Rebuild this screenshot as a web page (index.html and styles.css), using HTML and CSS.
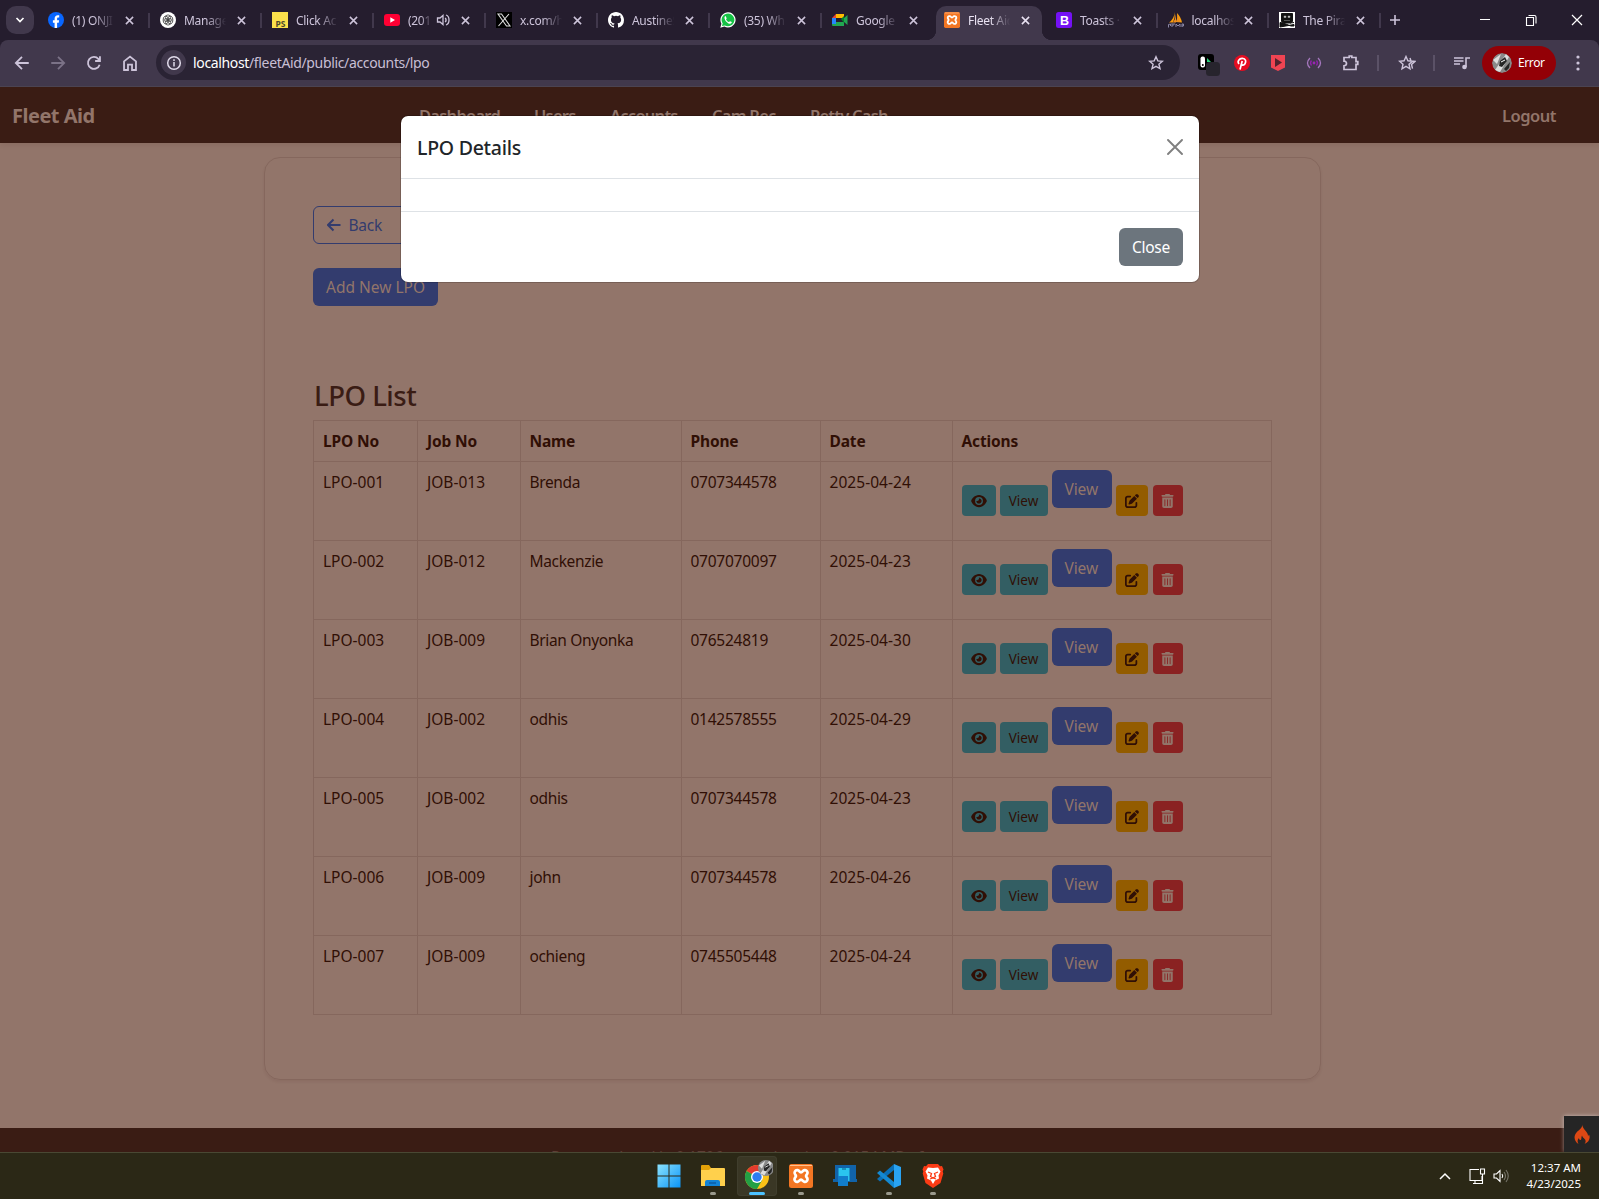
FILE: index.html
```html
<!DOCTYPE html>
<html lang="en">
<head>
<meta charset="utf-8">
<title>Fleet Aid</title>
<link rel="stylesheet" href="styles.css">
</head>
<body>
<svg class="defs" width="0" height="0">
  <symbol id="x" viewBox="0 0 10 10"><path d="M1 1l8 8M9 1l-8 8" fill="none" stroke="currentColor" stroke-width="1.700"/></symbol>
  <symbol id="eye" viewBox="0 0 576 512"><path fill="currentColor" d="M288 32c-80.800 0-145.500 36.800-192.600 80.600C48.600 156 17.300 208 2.500 243.700c-3.300 7.900-3.300 16.700 0 24.600C17.300 304 48.600 356 95.400 399.400 142.500 443.200 207.200 480 288 480s145.500-36.800 192.600-80.600c46.800-43.500 78.100-95.400 93-131.100 3.300-7.900 3.300-16.700 0-24.600-14.900-35.700-46.200-87.700-93-131.100C433.500 68.800 368.800 32 288 32zM144 256a144 144 0 1 1 288 0 144 144 0 1 1-288 0zm144-64c0 35.300-28.700 64-64 64-7.100 0-13.900-1.200-20.300-3.300-5.500-1.800-11.900 1.600-11.700 7.400.3 6.900 1.300 13.800 3.200 20.700 13.700 51.200 66.400 81.600 117.600 67.900s81.600-66.400 67.900-117.600c-11.100-41.500-47.800-69.400-88.600-71.100-5.800-.2-9.200 6.100-7.400 11.700 2.100 6.400 3.300 13.200 3.300 20.300z"/></symbol>
  <symbol id="edit" viewBox="0 0 512 512"><path fill="currentColor" d="M471.600 21.700c-21.900-21.900-57.300-21.900-79.200 0L362.300 51.700l97.900 97.900 30.100-30.100c21.900-21.900 21.900-57.300 0-79.200L471.600 21.700zm-299.200 220c-6.100 6.100-10.800 13.600-13.500 21.900l-29.600 88.800c-2.900 8.600-.6 18.100 5.800 24.600s15.900 8.700 24.600 5.800l88.800-29.600c8.200-2.700 15.700-7.400 21.900-13.500L437.700 172.300 339.700 74.300 172.400 241.700zM96 64C43 64 0 107 0 160V416c0 53 43 96 96 96H352c53 0 96-43 96-96V320c0-17.700-14.300-32-32-32s-32 14.300-32 32v96c0 17.700-14.300 32-32 32H96c-17.700 0-32-14.300-32-32V160c0-17.700 14.300-32 32-32h96c17.700 0 32-14.300 32-32s-14.300-32-32-32H96z"/></symbol>
  <symbol id="trash" viewBox="0 0 448 512"><path fill="currentColor" fill-rule="evenodd" d="M135.200 17.700L128 32H32C14.300 32 0 46.300 0 64s14.300 32 32 32H416c17.700 0 32-14.300 32-32s-14.300-32-32-32H320l-7.200-14.300C307.400 6.800 296.300 0 284.200 0H163.800c-12.100 0-23.200 6.800-28.600 17.700zM416 128H32V448c0 35.300 28.700 64 64 64H352c35.300 0 64-28.700 64-64V128zM144 208V432c0 8.800-7.200 16-16 16s-16-7.200-16-16V208c0-8.800 7.200-16 16-16s16 7.200 16 16zm96 0V432c0 8.800-7.200 16-16 16s-16-7.200-16-16V208c0-8.800 7.200-16 16-16s16 7.200 16 16zm96 0V432c0 8.800-7.200 16-16 16s-16-7.200-16-16V208c0-8.800 7.200-16 16-16s16 7.200 16 16z"/></symbol>
  <symbol id="xampp" viewBox="0 0 24 24"><rect width="24" height="24" rx="2.500" fill="#f37623"/><path d="M1 1.500h22" stroke="#ffc08e"/><path d="M8.500 6.200a2.600 2.600 0 0 0-2.300 4.300Q7.700 12 6.200 13.500a2.600 2.600 0 1 0 4 3.300Q12 14.500 13.800 16.800a2.600 2.600 0 1 0 4-3.300Q16.300 12 17.800 10.500a2.600 2.600 0 1 0-4-3.300Q12 9.500 10.200 7.200a2.600 2.600 0 0 0-1.700-1z" fill="none" stroke="#fff" stroke-width="2.700"/></symbol>
  <symbol id="face" viewBox="0 0 20 20"><circle cx="10" cy="10" r="10" fill="#898989"/><path d="M3 17L14 1l3 3-9 15zM1 7l8-6-4 10z" fill="#ddd"/><path d="M8 8l5-4 2 4-5 6-3-1zM12 16l6-7-1 6-3 3z" fill="#252525"/><path d="M9 9l4-2" stroke="#fff"/></symbol>
</svg>

<header class="tabs">
  <div class="tabmenu"><svg width="10" height="10" viewBox="0 0 10 10"><path d="M1.500 3l3.500 3.500L8.500 3" fill="none" stroke="currentColor" stroke-width="1.700"/></svg></div>
  <div class="tab"><svg class="fav" viewBox="0 0 16 16"><circle cx="8" cy="8" r="8" fill="#0866ff"/><path d="M6.600 16v-5.300H4.900V8.200h1.700V7c0-2.700 1.300-3.800 3.300-3.800l1.300.1v2.200h-.9c-.9 0-1.200.4-1.200 1.300v1.400h2l-.4 2.500H9.100V16z" fill="#fff"/></svg><span class="title">(1) ONJI</span><svg class="x"><use href="#x"/></svg></div>
  <div class="tab"><svg class="fav" viewBox="0 0 16 16"><circle cx="8" cy="8" r="8" fill="#fff"/><g fill="none" stroke="#444" stroke-width=".8"><ellipse cx="8" cy="5.600" rx="2.600" ry="2.700"/><ellipse cx="8" cy="5.600" rx="2.600" ry="2.700" transform="rotate(60 8 8)"/><ellipse cx="8" cy="5.600" rx="2.600" ry="2.700" transform="rotate(120 8 8)"/><ellipse cx="8" cy="5.600" rx="2.600" ry="2.700" transform="rotate(180 8 8)"/><ellipse cx="8" cy="5.600" rx="2.600" ry="2.700" transform="rotate(240 8 8)"/><ellipse cx="8" cy="5.600" rx="2.600" ry="2.700" transform="rotate(300 8 8)"/></g></svg><span class="title">Manage</span><svg class="x"><use href="#x"/></svg></div>
  <div class="tab"><svg class="fav" viewBox="0 0 16 16"><path d="M0 0h16v16H0z" fill="#fbe04b"/><text x="3.500" y="14.500" class="ps">PS</text></svg><span class="title">Click Ac</span><svg class="x"><use href="#x"/></svg></div>
  <div class="tab"><svg class="fav" viewBox="0 0 16 16"><rect y="2" width="16" height="12" rx="3" fill="#ff0033"/><path d="M6.300 5.200v5.600L11 8z" fill="#fff"/></svg><span class="title short">(201</span><svg class="vol" viewBox="0 0 14 14"><path d="M1.500 5v4H4l3 2.500v-9L4 5zM9.200 4.800q1.800 2.200 0 4.400M10 2q3 1 3 5t-3 5" fill="none" stroke="currentColor" stroke-width="1.300"/></svg><svg class="x"><use href="#x"/></svg></div>
  <div class="tab"><svg class="fav" viewBox="0 0 16 16"><path d="M0 0h16v16H0z" fill="#000"/><path d="M2 2h3.500L14 14h-3.500zM13 2L2.500 14" fill="none" stroke="#ddd" stroke-width="1.100"/></svg><span class="title">x.com/h</span><svg class="x"><use href="#x"/></svg></div>
  <div class="tab"><svg class="fav" viewBox="0 0 16 16"><path fill="#fff" d="M8 0C3.580 0 0 3.580 0 8c0 3.540 2.290 6.530 5.470 7.590.4.070.55-.17.55-.38v-1.490c-2.010.37-2.530-.49-2.690-.94-.09-.23-.48-.94-.82-1.130-.28-.15-.68-.52-.01-.53.63-.01 1.080.58 1.230.82.720 1.210 1.870.87 2.330.66.070-.52.280-.87.510-1.070-1.780-.2-3.640-.89-3.640-3.950 0-.87.310-1.590.82-2.150-.08-.2-.36-1.020.08-2.120 0 0 .67-.21 2.200.82a7.500 7.500 0 0 1 4 0c1.530-1.040 2.200-.82 2.200-.82.44 1.100.16 1.920.08 2.120.51.560.82 1.270.82 2.150 0 3.070-1.870 3.750-3.650 3.950.29.250.54.730.54 1.480v2.200c0 .21.150.46.550.38A8 8 0 0 0 16 8c0-4.420-3.580-8-8-8z"/></svg><span class="title">AustineS</span><svg class="x"><use href="#x"/></svg></div>
  <div class="tab"><svg class="fav" viewBox="0 0 16 16"><path d="M.3 15.700l1.100-4A7.600 7.600 0 1 1 4.400 14.600z" fill="#fff"/><path d="M1.900 14.100l.8-2.600a6.400 6.400 0 1 1 2.200 2z" fill="#15c245"/><path d="M5.700 4.100c-.5 0-1.300.7-1.200 1.800.3 3 3.700 5.900 5.600 5.900 1.300-.1 1.800-1 1.700-1.700L10 9.200l-1 .9C7.600 9.500 6.600 8.500 6 7.200l.7-.8z" fill="#fff"/></svg><span class="title">(35) Wh</span><svg class="x"><use href="#x"/></svg></div>
  <div class="tab last"><svg class="fav" viewBox="0 0 16 16"><path d="M0 6h4v7H0z" fill="#2684fc"/><path d="M4 2v4H0z" fill="#ea4335"/><path d="M4 2h8v4H4z" fill="#ffba00"/><path d="M4 10h8v4H1q-1 0-1-1v-1h4zM12 6l3.500-3v10L12 10z" fill="#22a652"/><path d="M9 7l3-3v7z" fill="#00832d"/></svg><span class="title">Google</span><svg class="x"><use href="#x"/></svg></div>
  <div class="tab active"><svg class="fav"><use href="#xampp"/></svg><span class="title">Fleet Aid</span><svg class="x"><use href="#x"/></svg></div>
  <div class="tab"><svg class="fav" viewBox="0 0 16 16"><rect width="16" height="16" rx="2.500" fill="#7411f5"/><text x="4" y="12.800" class="bs">B</text></svg><span class="title">Toasts ·</span><svg class="x"><use href="#x"/></svg></div>
  <div class="tab"><svg class="fav" viewBox="0 0 16 16"><path d="M7 0Q6 7 1 10.500h4Q7 6 7 0zM9 1q4 4 5 9.500L8 10q2-4 1-9z" fill="#f89c0e"/><path d="M5 10.500q2.500-3 3-8.500v8.500zM8 10q2-3 1.500-7L12 10z" fill="#ee8d1c"/><path d="M.5 15.500v-3l2-.5v2M4 11v4m0-2h2v-2M8 15v-3l2 2 2-2v3m2 0v-3h1.500v2H14" fill="none" stroke="#8b87a5"/></svg><span class="title">localhos</span><svg class="x"><use href="#x"/></svg></div>
  <div class="tab"><svg class="fav" viewBox="0 0 16 16"><path d="M0 0h16v16H0z" fill="#fff"/><path d="M2.500 1.500h11v8l-2 1.500h-7l-2-1.500zM1 10.500l3 .5 8 3h3v-1.500L1 15v-2zM15 10.500l-4 .5" fill="#111" stroke="#111"/><path d="M5 4h2v1.500H5zm4 0h2v1.500H9zM5 8.500h6" fill="#bbb" stroke="#bbb" stroke-width=".4"/></svg><span class="title">The Pira</span><svg class="x"><use href="#x"/></svg></div>
  <svg class="plus" viewBox="0 0 12 12"><path d="M6 1v10M1 6h10" stroke="currentColor" stroke-width="1.600"/></svg>
  <div class="winctl">
    <svg width="12" height="12" viewBox="0 0 12 12"><path d="M1 5.500h10" stroke="#fff"/></svg>
    <svg width="12" height="12" viewBox="0 0 12 12"><path d="M1.500 3.500h7v8h-7zM3.500 1.500h6q1.500 0 1.500 1.500v6.500" fill="none" stroke="#fff" stroke-width="1.100"/></svg>
    <svg width="12" height="12" viewBox="0 0 12 12"><path d="M1 1l10 10M11 1L1 11" stroke="#fff" stroke-width="1.200"/></svg>
  </div>
</header>

<div class="toolbar">
  <svg class="nav" viewBox="0 0 16 16"><path d="M14 8H3M8 2.500L2.500 8 8 13.500" fill="none" stroke="currentColor" stroke-width="1.600"/></svg>
  <svg class="nav dim" viewBox="0 0 16 16"><path d="M2 8h11M8 2.500L13.500 8 8 13.500" fill="none" stroke="currentColor" stroke-width="1.600"/></svg>
  <svg class="nav" viewBox="0 0 16 16"><path d="M13 9.500A5.300 5.300 0 1 1 12 4.500l1 1.200M13.300 2v4.200H9" fill="none" stroke="currentColor" stroke-width="1.600"/></svg>
  <svg class="nav" viewBox="0 0 16 16"><path d="M2.700 14.200V6.500L8 2.300l5.300 4.200v7.700H9.800V9.500H6.200v4.700z" fill="none" stroke="currentColor" stroke-width="1.600"/></svg>
  <div class="omnibox">
    <span class="info"><svg width="16" height="16" viewBox="0 0 16 16"><circle cx="8" cy="8" r="6.300" fill="none" stroke="currentColor" stroke-width="1.500"/><path d="M8 7v4.500M8 4.300v1.600" stroke="currentColor" stroke-width="1.500"/></svg></span>
    <span class="url"><b>localhost</b>/fleetAid/public/accounts/lpo</span>
    <svg class="star" width="16" height="16" viewBox="0 0 16 16"><path d="M8 1.800l1.800 4.100 4.500.4-3.400 2.900 1.100 4.400L8 11.300l-4 2.300 1.100-4.400-3.400-2.900 4.500-.4z" fill="none" stroke="currentColor" stroke-width="1.400"/></svg>
  </div>
  <div class="exts">
    <svg width="22" height="24" viewBox="0 0 22 24"><rect width="16" height="16" rx="3" y="1"/><rect x="2.500" y="3.500" width="4.500" height="11" rx="2" fill="#fff"/><path d="M9 5l4 4H9z" fill="#2bd27c"/><circle cx="4.800" cy="12" r="1"/><rect x="8" y="9" width="14" height="14" rx="3.500" fill="#27242d"/></svg>
    <svg width="16" height="16" viewBox="0 0 16 16"><circle cx="8" cy="8" r="8" fill="#e60c20"/><path d="M6 14.500L8.200 6M5 9Q3.400 7 4.700 5.300 6 3.300 8.300 3.400c3.600.1 4 3.200 2.700 5.400-1.200 2-3.200 1.500-3.600.3" fill="none" stroke="#fff" stroke-width="1.700"/></svg>
    <svg class="gap" width="16" height="16" viewBox="0 0 16 16"><path d="M1 0h14v12.500L8 16l-7-3.500z" fill="#ef4452"/><path d="M5 3v9l7-4.500z" fill="#51232e"/></svg>
    <svg class="gap" width="16" height="16" viewBox="0 0 16 16"><g fill="none" stroke="#a477bd" stroke-width="1.300"><path d="M4 3Q-1 8 4 13M12 3q5 5 0 10"/><path d="M5.500 5.500Q3.500 8 5.500 10.500M10.500 5.500q2 2.500 0 5" stroke="#8f20aa"/></g><circle cx="8" cy="8" r="1.400" fill="#9a26b5"/></svg>
    <svg class="gap" width="18" height="18" viewBox="0 0 18 18"><path d="M2 3.500h5.200V2h2.600v1.500H14v4.200h1.800v2.600H14V15.500H2v-3.700q2.500 0 2.500-2.300T2 7.200z" fill="none" stroke="currentColor" stroke-width="1.700"/></svg>
    <i class="sep"></i>
    <svg width="18" height="16" viewBox="0 0 18 16"><path d="M8 1.500l1.900 4.300 4.600.4-3.500 3 1 4.600L8 11.400l-4 2.400 1-4.600-3.500-3 4.600-.4zM12 3l1 3 4 .4-3.500 3 1 4.300" fill="none" stroke="currentColor" stroke-width="1.400"/></svg>
    <i class="sep"></i>
    <svg width="16" height="14" viewBox="0 0 16 14"><path d="M0 2h9.500M0 5h9.500M0 8h6M12 11V2h4" fill="none" stroke="currentColor" stroke-width="1.600"/><circle cx="10.500" cy="11" r="2.300" fill="currentColor"/></svg>
  </div>
  <div class="profile"><svg width="20" height="20"><use href="#face"/></svg><span>Error</span></div>
  <svg class="dots" width="4" height="16" viewBox="0 0 4 16"><g fill="currentColor"><circle cx="2" cy="2" r="1.600"/><circle cx="2" cy="8" r="1.600"/><circle cx="2" cy="14" r="1.600"/></g></svg>
</div>

<main class="page">
  <nav class="navbar">
    <span class="brand">Fleet Aid</span>
    <div class="links"><span class="l1">Dashboard</span><span class="l2">Users</span><span class="l3">Accounts</span><span class="l4">Cam Rec</span><span>Petty Cash</span></div>
    <span class="logout">Logout</span>
  </nav>
  <section class="card">
    <div class="btn outline"><svg width="14" height="14" viewBox="0 0 14 14"><path d="M13.500 7H1.500M6.500 1.500L1 7l5.500 5.500" fill="none" stroke="currentColor" stroke-width="2"/></svg>Back</div>
    <div class="btn primary add">Add New LPO</div>
    <h2>LPO List</h2>
    <table>
      <colgroup><col class="c1"><col class="c2"><col class="c3"><col class="c4"><col class="c5"><col class="c6"></colgroup>
      <thead><tr><th>LPO No</th><th>Job No</th><th>Name</th><th>Phone</th><th>Date</th><th>Actions</th></tr></thead>
      <tbody>
      <tr><td>LPO-001</td><td>JOB-013</td><td>Brenda</td><td>0707344578</td><td>2025-04-24</td><td><div class="acts"><span class="sm eye"><svg><use href="#eye"/></svg></span><span class="sm view">View</span><span class="btn primary">View</span><span class="sm edit"><svg><use href="#edit"/></svg></span><span class="sm trash"><svg><use href="#trash"/></svg></span></div></td></tr>
      <tr><td>LPO-002</td><td>JOB-012</td><td>Mackenzie</td><td>0707070097</td><td>2025-04-23</td><td><div class="acts"><span class="sm eye"><svg><use href="#eye"/></svg></span><span class="sm view">View</span><span class="btn primary">View</span><span class="sm edit"><svg><use href="#edit"/></svg></span><span class="sm trash"><svg><use href="#trash"/></svg></span></div></td></tr>
      <tr><td>LPO-003</td><td>JOB-009</td><td>Brian Onyonka</td><td>076524819</td><td>2025-04-30</td><td><div class="acts"><span class="sm eye"><svg><use href="#eye"/></svg></span><span class="sm view">View</span><span class="btn primary">View</span><span class="sm edit"><svg><use href="#edit"/></svg></span><span class="sm trash"><svg><use href="#trash"/></svg></span></div></td></tr>
      <tr><td>LPO-004</td><td>JOB-002</td><td>odhis</td><td>0142578555</td><td>2025-04-29</td><td><div class="acts"><span class="sm eye"><svg><use href="#eye"/></svg></span><span class="sm view">View</span><span class="btn primary">View</span><span class="sm edit"><svg><use href="#edit"/></svg></span><span class="sm trash"><svg><use href="#trash"/></svg></span></div></td></tr>
      <tr><td>LPO-005</td><td>JOB-002</td><td>odhis</td><td>0707344578</td><td>2025-04-23</td><td><div class="acts"><span class="sm eye"><svg><use href="#eye"/></svg></span><span class="sm view">View</span><span class="btn primary">View</span><span class="sm edit"><svg><use href="#edit"/></svg></span><span class="sm trash"><svg><use href="#trash"/></svg></span></div></td></tr>
      <tr><td>LPO-006</td><td>JOB-009</td><td>john</td><td>0707344578</td><td>2025-04-26</td><td><div class="acts"><span class="sm eye"><svg><use href="#eye"/></svg></span><span class="sm view">View</span><span class="btn primary">View</span><span class="sm edit"><svg><use href="#edit"/></svg></span><span class="sm trash"><svg><use href="#trash"/></svg></span></div></td></tr>
      <tr><td>LPO-007</td><td>JOB-009</td><td>ochieng</td><td>0745505448</td><td>2025-04-24</td><td><div class="acts"><span class="sm eye"><svg><use href="#eye"/></svg></span><span class="sm view">View</span><span class="btn primary">View</span><span class="sm edit"><svg><use href="#edit"/></svg></span><span class="sm trash"><svg><use href="#trash"/></svg></span></div></td></tr>
      </tbody>
    </table>
  </section>
  <footer>Page rendered in 0.1706 seconds using 0.0154 MB of memory.</footer>
  <div class="debug"><svg width="16" height="20" viewBox="0 0 16 20"><path d="M8 0c1 4-3 5.500-5.500 8.500C-.8 12.500.2 17.500 4.500 20 3 17.500 3.600 15.500 5 14c0 1.500.8 2 1.600 2 1.400-.5.200-2.500 1.400-4.500.4 2.500 3.600 3 3.600 5.800 0 1.200-.5 2.100-1.200 2.700 4.500-1.500 6.400-6 4.600-9.500l-1 1.700C14.300 7.500 8.800 6 8 0z" fill="#dd4814"/></svg></div>
  <div class="modal">
    <div class="mhead"><h5>LPO Details</h5><svg width="16" height="16" viewBox="0 0 16 16"><path d="M1 1l14 14M15 1L1 15" stroke="#808080" stroke-width="1.900" stroke-linecap="round"/></svg></div>
    <div class="mbody"></div>
    <div class="mfoot"><span class="btn secondary">Close</span></div>
  </div>
</main>

<div class="taskbar">
  <div class="apps">
    <div class="app"><svg width="24" height="24" viewBox="0 0 24 24"><defs><linearGradient id="w" x1="0" y1="0" x2="1" y2="1"><stop stop-color="#8be3ff"/><stop offset="1" stop-color="#0a94f7"/></linearGradient></defs><path d="M.5.500H11.500V11.500H.5zM12.500.500H23.500V11.500H12.500zM.5 12.500H11.500V23.500H.5zM12.500 12.500H23.500V23.500H12.500z" fill="url(#w)"/></svg></div>
    <div class="app run"><svg width="24" height="24" viewBox="0 0 24 24"><path d="M0 2q0-1 1-1h7l2 3v5H0z" fill="#e3a108"/><path d="M0 6h8l2-2h13q1 0 1 1v17H0z" fill="#ffd04c"/><path d="M4 22v-4q0-2 2-2h11q2 0 2 2v4z" fill="#1283d6"/><path d="M8 19h7" stroke="#0b5ca6" stroke-width="1.500"/></svg></div>
    <div class="app on"><svg width="32" height="32" viewBox="0 0 32 32"><circle cx="16" cy="17" r="12" fill="#fbc116"/><path d="M16 17L5.600 11A12 12 0 0 1 26.400 11z" fill="#e33b2e"/><path d="M16 17L5.600 11A12 12 0 0 0 16 29l5.200-9z" fill="#23a045"/><circle cx="16" cy="17" r="6" fill="#fff"/><circle cx="16" cy="17" r="4.700" fill="#2d7df0"/><svg x="17" y="0" width="16" height="16"><use href="#face"/></svg></svg></div>
    <div class="app run"><svg width="24" height="24"><use href="#xampp"/></svg></div>
    <div class="app"><svg width="24" height="24" viewBox="0 0 24 24"><path d="M2 1h21v14h1v3H0v-3h2z" fill="#1163a9"/><path d="M5.500 4h11v13h-11z" fill="#2ac5ef"/><path d="M5 12h10v10H5z" fill="#117dcb"/><path d="M9 5h4" stroke="#075d89"/></svg></div>
    <div class="app run"><svg width="24" height="24" viewBox="0 0 24 24"><path d="M17 6L3 17.500 0 15 17 0z" fill="#0a6fb6"/><path d="M17 18L3 6.500 0 9 17 24z" fill="#1489d2"/><path d="M17 0l7 3v18l-7 3z" fill="#29a3f2"/></svg></div>
    <div class="app run"><svg width="24" height="24" viewBox="0 0 24 24"><path d="M7 0h10l2 2.300 2-.2 1.500 3.500-.8 2 .6 2L19.500 19 12 24l-7.500-5L1.700 9.600l.6-2-.8-2L3 2.100l2 .2z" fill="#fb3b15"/><path d="M12 4l5-.5 2.500 4-2 4 .5 3-4 2L12 20l-2-3.500-4-2 .5-3-2-4 2.500-4z" fill="#fff"/><path d="M7 8l3.500 1.500-1 3L12 14l2.500-1.500-1-3L17 8M9 15l3-1 3 1" fill="none" stroke="#fb3b15" stroke-width="1.300"/></svg></div>
  </div>
  <div class="tray">
    <svg width="12" height="8" viewBox="0 0 12 8"><path d="M1 7l5-5 5 5" fill="none" stroke="#fff" stroke-width="1.500"/></svg>
    <svg class="mon" width="17" height="17" viewBox="0 0 17 17"><path d="M10 1.500H1v11h12V8M4 15.500h9M6 13v2M11.500 1h4v5h-4zM13.500 6v10" fill="none" stroke="#fff" stroke-width="1.100"/></svg>
    <svg class="spk" width="17" height="14" viewBox="0 0 17 14"><path d="M1 5v4h2.500L7 12.500v-11L3.500 5zM9 5q1.500 2 0 4" fill="none" stroke="#fff" stroke-width="1.100"/><path d="M11 3q3 4 0 8M13 1q4.500 6 0 12" fill="none" stroke="#77756a" stroke-width="1.100"/></svg>
    <div class="clock"><span>12:37 AM</span><span>4/23/2025</span></div>
  </div>
</div>
</body>
</html>
```
FILE: styles.css
```css
* { box-sizing: border-box; }
body { margin: 0; width: 1599px; height: 1199px; overflow: hidden; display: grid; grid-template-rows: 40px 47px 1065px 47px; background: #251d2e; font-family: "Noto Sans", sans-serif; }
svg { display: block; flex: none; }
.defs { position: absolute; }

/* browser tabs */
.tabs { display: flex; padding-left: 6px; color: #cdc4da; background: #251d2e; font-size: 12px; letter-spacing: -.3px; }
.tabmenu { width: 28px; height: 28px; margin: 6px 3px 0 0; border-radius: 10px; background: #41384c; display: grid; place-items: center; color: #fff; }
.tab { width: 112px; height: 34px; margin-top: 6px; padding: 0 13px 6px 11px; display: flex; align-items: center; position: relative; flex: none; }
.tab::after { content: ""; position: absolute; right: -1px; top: 7px; width: 2px; height: 15px; background: #41384c; }
.tab.last::after, .tab.active::after { display: none; }
.fav { width: 16px; height: 16px; margin-right: 8px; }
.title { width: 44px; white-space: nowrap; -webkit-mask-image: linear-gradient(90deg, #000 50%, transparent 96%); mask-image: linear-gradient(90deg, #000 50%, transparent 96%); }
.title.short { width: 25px; }
.vol { width: 14px; height: 14px; margin-left: 3px; }
.x { width: 9px; height: 9px; margin-left: auto; margin-right: 2px; }
.tab:not(.active) .x { color: #cdc4da; }
.active { width: 106px; margin-left: 3px; margin-right: 3px; padding-left: 8px; padding-right: 10px; background: #41384c; border-radius: 10px 10px 0 0; color: #e9e2f2; }
.active::before { content: ""; position: absolute; left: -10px; right: -10px; bottom: 0; height: 10px; background: radial-gradient(circle at 0 0, transparent 10px, #41384c 10.5px) left / 10px 10px no-repeat, radial-gradient(circle at 100% 0, transparent 10px, #41384c 10.5px) right / 10px 10px no-repeat; }
.active ~ .tab { width: 111.500px; }
.ps { font: bold 8.500px "Noto Sans", sans-serif; fill: #4d4a2c; letter-spacing: 0; }
.bs { font: bold 12.500px "Liberation Sans", sans-serif; fill: #fff; letter-spacing: 0; }
.plus { width: 12px; height: 12px; margin: 14px 0 0 9px; }
.winctl { display: flex; gap: 34px; margin: 14px 16px 0 auto; }

/* toolbar */
.toolbar { display: flex; align-items: center; height: 47px; padding: 0 19px 1px 13px; background: #41384c; border-bottom: 1px solid #4b4351; border-radius: 8px 8px 0 0; color: #cdc4da; }
.nav { width: 18px; height: 18px; margin-right: 18px; }
.nav.dim { color: #7b7287; }
.omnibox { width: 1024px; height: 35px; margin-left: -1px; padding: 0 16px 0 5px; border-radius: 18px; background: #2a2334; display: flex; align-items: center; flex: none; }
.info { width: 25px; height: 25px; border-radius: 50%; background: #41384c; display: grid; place-items: center; color: #e0daea; }
.url { margin-left: 7px; font-size: 14px; letter-spacing: -.35px; color: #c8bfd4; }
.url b { font-weight: 400; color: #fff; }
.star { margin-left: auto; }
.exts { display: flex; align-items: center; margin-left: 18px; gap: 18.500px; }
.exts svg:first-child { margin: 5px -5px 0 0; }
.exts .gap { margin-left: 1.500px; }
.sep { width: 2px; height: 16px; margin-left: -1px; background: #5b5267; }
.profile { margin-left: auto; width: 74px; height: 34px; border-radius: 17px; background: #930006; display: flex; align-items: center; padding-left: 10px; gap: 6px; font-size: 12px; color: #fff; letter-spacing: -.4px; }
.profile svg { overflow: hidden; border-radius: 50%; }
.dots { margin-left: 20px; }

/* page */
.page { position: relative; overflow: hidden; background: #92756a; color: #300f05; display: flex; flex-direction: column; align-items: center; font-size: 15.500px; letter-spacing: -.25px; line-height: 24px; }
.navbar { width: 100%; height: 56px; flex: none; display: flex; align-items: center; padding: 2px 43px 0 12px; background: #3a1c14; color: #92756a; font-weight: 600; font-size: 16.500px; letter-spacing: -.75px; box-shadow: 0 2px 5px rgba(58,28,20,.1); }
.brand { font-size: 20px; font-weight: 700; width: 407px; letter-spacing: -.5px; }
.links { display: flex; }
.l1 { width: 115px; } .l2 { width: 76px; } .l3 { width: 102px; } .l4 { width: 98px; }
.logout { margin-left: auto; letter-spacing: -.5px; }
.card { width: 1057px; height: 923px; margin: 14px 14px 0 0; padding: 48px; border: 1px solid #85675d; border-radius: 16px; flex: none; box-shadow: 0 2px 3px rgba(58,28,20,.08); }
.btn { height: 38px; border-radius: 6px; padding: 6px 13px; display: inline-flex; align-items: center; white-space: nowrap; }
.primary { background: #333c6e; color: #92756a; }
.outline { display: flex; width: 120px; border: 1px solid #333c6e; color: #333c6e; gap: 8px; padding: 0 12.500px; }
.add { display: flex; width: 125px; margin-top: 24px; letter-spacing: 0; }
h2 { margin: 73px 0 7px 1px; font-size: 27.500px; line-height: 34px; font-weight: 500; letter-spacing: -.5px; color: #3a1c14; }
table { width: 958px; table-layout: fixed; border-collapse: collapse; }
.c1 { width: 104px; } .c2 { width: 103px; } .c3 { width: 161px; } .c4 { width: 139px; } .c5 { width: 132px; } .c6 { width: 319px; }
th, td { border: 1px solid #85675d; text-align: left; vertical-align: top; padding: 8px 8.500px; }
th { height: 41px; font-weight: 700; letter-spacing: -.15px; }
td { height: 79px; }
td:nth-child(-n+2) { letter-spacing: 0; }
td:nth-child(3) { letter-spacing: -.35px; }
td:nth-child(5) { letter-spacing: .05px; }
td:nth-child(-n+2), th:nth-child(-n+2) { padding-left: 9px; }
.acts { display: flex; gap: 4px; align-items: flex-start; }
.sm { height: 31px; margin-top: 15px; border-radius: 4px; display: grid; place-items: center; font-size: 13.500px; }
.acts .btn { width: 60px; letter-spacing: -.1px; }
.eye { width: 34px; background: #335e63; } .eye svg { width: 16px; height: 14px; }
.view { width: 48px; background: #335e63; letter-spacing: 0; }
.edit { width: 32px; background: #935c00; } .edit svg { width: 14px; height: 14px; }
.trash { width: 30px; margin-left: 1px; background: #8a2222; color: #92756a; } .trash svg { width: 13px; height: 14px; margin-right: 1px; }
footer { width: 100%; height: 24px; margin-top: auto; padding: 17px 0 0 551px; background: #3a1c14; color: #5e3f36; overflow: hidden; flex: none; white-space: nowrap; }
.debug { position: absolute; right: 0; bottom: 0; width: 35px; height: 36px; background: #252525; display: grid; place-items: center; box-shadow: 0 0 4px rgba(255,255,255,.5); }
.modal { position: absolute; left: 400px; top: 28px; width: 800px; border: 1px solid rgba(0,0,0,.18); border-radius: 8px; background: #fff; background-clip: padding-box; color: #212529; }
.mhead { height: 63px; padding: 0 16px; display: flex; align-items: center; justify-content: space-between; border-bottom: 1px solid #dee2e6; }
h5 { margin: 2px 0 0; font-size: 19.500px; font-weight: 500; letter-spacing: -.25px; }
.mbody { height: 32px; }
.mfoot { height: 71px; padding: 16px; border-top: 1px solid #dee2e6; display: flex; justify-content: flex-end; }
.secondary { background: #6c757d; color: #fff; }

/* taskbar */
.taskbar { position: relative; background: #2b2816; border-top: 1px solid #494833; display: grid; grid-template-columns: 1fr auto 1fr; }
.apps { grid-column: 2; display: flex; gap: 4px; padding-top: 3px; margin-left: 2px; }
.app { width: 40px; height: 40px; display: grid; place-items: center; position: relative; border-radius: 4px; }
.app.on { background: #3a3725; box-shadow: inset 0 0 0 1px #403e2d; }
.app.run::after, .app.on::after { content: ""; position: absolute; bottom: 1px; left: 17px; width: 6px; height: 3px; border-radius: 2px; background: #9a998c; }
.app.on::after { left: 12px; width: 16px; background: #4cc2ff; }
.tray { display: flex; align-items: center; justify-content: flex-end; padding-right: 18px; color: #fff; }
.mon { margin-left: 18px; } .spk { margin-left: 7px; }
.clock { width: 71px; display: grid; text-align: right; font-size: 11.500px; line-height: 16px; letter-spacing: 0; }
```
